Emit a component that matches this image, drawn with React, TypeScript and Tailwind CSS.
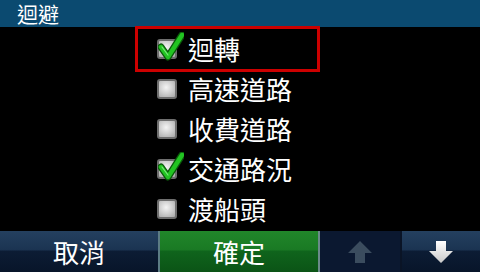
import React from "react";

const FONT = { fontFamily: '"Noto Sans CJK TC", "Noto Sans", sans-serif' };

function Check({ checked }: { checked: boolean }) {
  return (
    <div className="relative w-[20px] h-[20px] shrink-0">
      <div className="w-[20px] h-[20px] rounded-[3px] border-2 border-[#6e6e6e] bg-[radial-gradient(circle_at_45%_40%,#f4f4f4_0%,#d2d2d2_45%,#a6a6a6_100%)]" />
      {checked && (
        <svg className="absolute left-[1px] top-[-7px]" width="26" height="29" viewBox="0 0 26 29">
          <path d="M3 15 L10 25 L24 3" fill="none" stroke="#0a5a0a" strokeWidth="7" strokeLinecap="round" strokeLinejoin="round" />
          <path d="M3 15 L10 25 L24 3" fill="none" stroke="#22c422" strokeWidth="4.5" strokeLinecap="round" strokeLinejoin="round" />
          <path d="M4 15 L10 23" fill="none" stroke="#7ee87e" strokeWidth="1.2" strokeLinecap="round" />
        </svg>
      )}
    </div>
  );
}

function Row({ label, checked }: { label: string; checked: boolean }) {
  return (
    <div className="h-[40px] flex items-center pl-[22px] gap-[11px]">
      <Check checked={checked} />
      <span className="text-white text-[26px] leading-[32px]" style={FONT}>{label}</span>
    </div>
  );
}

export default function App() {
  return (
    <div className="w-[480px] h-[272px] bg-black flex flex-col overflow-hidden" style={FONT}>
      <div className="h-[27px] shrink-0 bg-[#0b4a70] pl-[17px] flex items-center">
        <span className="block text-white text-[21px] leading-[27px]">迴避</span>
      </div>
      <div className="flex flex-col pl-[135px] h-[204px]">
        <div className="relative -mt-[1px] w-[185px] h-[46px] border-[3px] border-[#cc0000] flex items-center pl-[19px] gap-[11px]">
          <Check checked={true} />
          <span className="text-white text-[26px] leading-[32px]">迴轉</span>
        </div>
        <div className="-mt-[3px] flex flex-col">
          <Row label="高速道路" checked={false} />
          <Row label="收費道路" checked={false} />
          <Row label="交通路況" checked={true} />
          <Row label="渡船頭" checked={false} />
        </div>
      </div>
      <div className="flex-1 flex">
        <div className="w-[158px] flex items-center justify-center bg-[linear-gradient(to_bottom,#24405f_0%,#1b3452_45%,#0c1c34_50%,#08152a_100%)]">
          <span className="text-white text-[26px] leading-[32px]">取消</span>
        </div>
        <div className="w-[2px] bg-[#5c7c84]" />
        <div className="w-[158px] flex items-center justify-center bg-[linear-gradient(to_bottom,#21862a_0%,#1a7a24_45%,#0f641c_50%,#0b5416_100%)]">
          <span className="text-white text-[26px] leading-[32px]">確定</span>
        </div>
        <div className="w-[2px] bg-[#6a8a8a]" />
        <div className="w-[80px] flex items-center justify-center bg-[#0b1830]">
          <svg width="26" height="24" viewBox="0 0 26 24">
            <path d="M13 1 L25 13 L18 13 L18 23 L8 23 L8 13 L1 13 Z" fill="#3b4c5e" />
          </svg>
        </div>
        <div className="w-[2px] bg-[#0a1426]" />
        <div className="flex-1 flex items-center justify-center bg-[linear-gradient(to_bottom,#24405f_0%,#1b3452_45%,#0c1c34_50%,#08152a_100%)]">
          <svg width="26" height="24" viewBox="0 0 26 24">
            <defs>
              <linearGradient id="dg" x1="0" y1="0" x2="0" y2="1">
                <stop offset="0" stopColor="#ffffff" />
                <stop offset="1" stopColor="#c8c8c8" />
              </linearGradient>
            </defs>
            <path d="M8 1 L18 1 L18 11 L25 11 L13 23 L1 11 L8 11 Z" fill="url(#dg)" />
          </svg>
        </div>
      </div>
    </div>
  );
}
